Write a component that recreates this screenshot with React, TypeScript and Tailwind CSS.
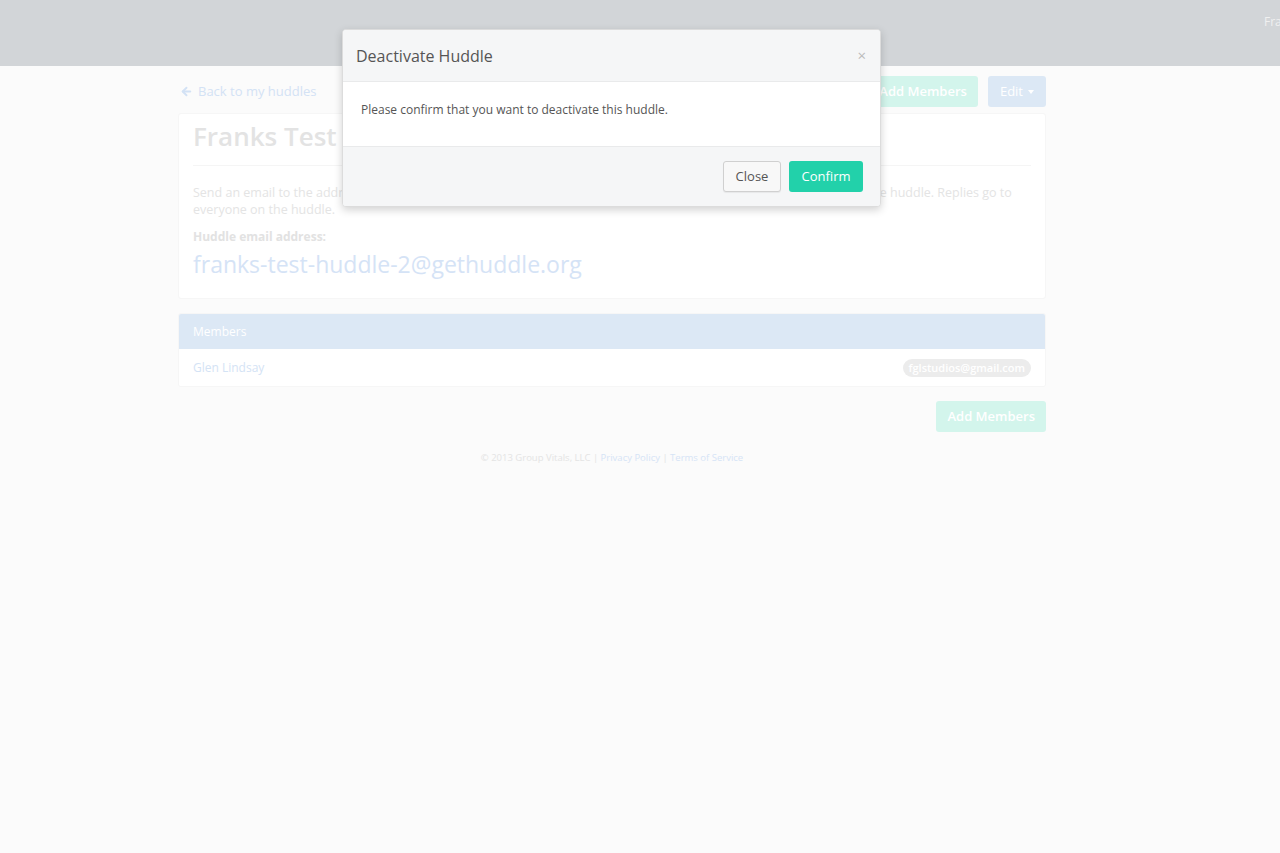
import { ArrowLeft } from "lucide-react";

const font = { fontFamily: '"Open Sans", "Liberation Sans", sans-serif' };

function MemberRow({ name, email }: { name: string; email: string }) {
  return (
    <div className="flex items-center justify-between h-[37px] px-[14px] bg-white">
      <span className="text-[12px] text-[#d4e3f5]">{name}</span>
      <span className="rounded-full bg-[#ececec] px-[6px] h-[18px] leading-[18px] text-[11px] font-semibold text-white">
        {email}
      </span>
    </div>
  );
}

export default function App() {
  return (
    <div style={font} className="relative min-h-[853px] w-[1280px] bg-[#fbfbfb] overflow-hidden">
      {/* Navbar */}
      <div className="h-[66px] bg-[#d2d5d8] flex overflow-hidden">
        <span className="shrink-0 mt-[13px] ml-[1264px] whitespace-nowrap text-[12px] text-[#f0f0f0]">Frank Lindsay</span>
      </div>

      {/* Page */}
      <div className="w-[868px] ml-[178px]">
        <div className="flex items-center justify-between h-[41px] pt-[10px]">
          <a className="flex items-center gap-[5px] text-[13px] text-[#d3e2f5] ml-[2px]">
            <ArrowLeft size={13} strokeWidth={3.5} />
            Back to my huddles
          </a>
          <div className="flex gap-[10px]">
            <button className="h-[31px] px-[11px] rounded-[3px] bg-[#d3f5ec] text-white text-[13px] font-semibold">
              Add Members
            </button>
            <button className="h-[31px] px-[12px] rounded-[3px] bg-[#dce8f5] text-white text-[13px] flex items-center gap-[5px]">
              Edit
              <span className="border-x-[3px] border-t-[4px] border-x-transparent border-t-white" />
            </button>
          </div>
        </div>

        <div className="mt-[6px] bg-white border border-[#f6f6f6] rounded-[3px] px-[14px] pt-[4px] pb-[18px]">
          <h1 className="text-[26px] font-semibold text-[#e3e3e3] leading-[36px]">Franks Test Huddle</h1>
          <div className="mt-[11px] border-t border-[#f5f5f5]" />
          <p className="mt-[18px] text-[12.5px] leading-[17px] text-[#e4e4e4] pr-[4px]">
            Send an email to the address below and the message will be distributed automatically to all of our own members of the huddle. Replies go to everyone on the huddle.
          </p>
          <div className="mt-[10px] text-[12px] font-bold text-[#e2e2e2]">Huddle email address:</div>
          <div className="mt-[2px] text-[23px] text-[#d5e3f6] leading-[32px]">franks-test-huddle-2@gethuddle.org</div>
        </div>

        <div className="mt-[14px] rounded-[3px] overflow-hidden border border-[#f6f6f6]">
          <div className="h-[35px] bg-[#dce8f5] px-[14px] flex items-center text-[12px] text-white">Members</div>
          <MemberRow name="Glen Lindsay" email="fglstudios@gmail.com" />
        </div>

        <div className="flex justify-end mt-[14px]">
          <button className="h-[31px] px-[11px] rounded-[3px] bg-[#d3f5ec] text-white text-[13px] font-semibold">
            Add Members
          </button>
        </div>

        <div className="mt-[19px] text-center text-[9.5px] leading-[14px] text-[#e4e4e4]">
          © 2013 Group Vitals, LLC | <span className="text-[#d6e4f6]">Privacy Policy</span> |{" "}
          <span className="text-[#d6e4f6]">Terms of Service</span>
        </div>
      </div>

      {/* Modal */}
      <div className="absolute left-[342px] top-[29px] w-[539px] rounded-[4px] overflow-hidden border border-[#dcdcdc] shadow-[0_3px_9px_rgba(0,0,0,0.18)] bg-white">
        <div className="h-[52px] bg-[#f5f6f7] border-b border-[#e9eaeb] flex items-center justify-between pl-[13px] pr-[14px]">
          <span className="text-[16px] text-[#555]">Deactivate Huddle</span>
          <span className="text-[15px] text-[#bbb] leading-none">×</span>
        </div>
        <div className="h-[64px] px-[18px] pt-[19px] text-[12px] text-[#555]">
          Please confirm that you want to deactivate this huddle.
        </div>
        <div className="h-[60px] bg-[#f5f6f7] border-t border-[#e9eaeb] flex items-center justify-end gap-[8px] pr-[17px]">
          <button className="h-[31px] w-[58px] rounded-[3px] border border-[#d0d0d0] bg-[#f8f8f8] text-[13px] text-[#555] shadow-[0_1px_1px_rgba(0,0,0,0.06)]">
            Close
          </button>
          <button className="h-[31px] w-[74px] rounded-[3px] bg-[#22d1aa] text-[13px] text-white">
            Confirm
          </button>
        </div>
      </div>
    </div>
  );
}
